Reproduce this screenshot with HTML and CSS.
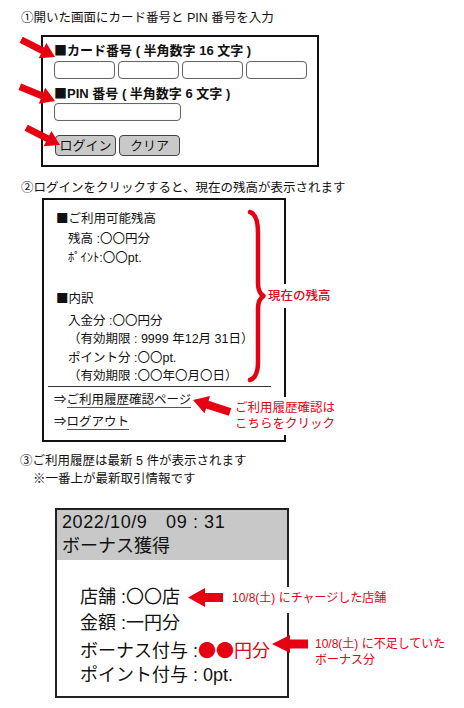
FILE: index.html
```html
<!DOCTYPE html>
<html lang="ja">
<head>
<meta charset="utf-8">
<title>ログイン手順</title>
<link rel="stylesheet" href="styles.css">
</head>
<body>
<div class="page">
  <section class="step step1">
    <p class="title">①開いた画面にカード番号と PIN 番号を入力</p>
    <div class="login-box">
      <p class="field-label"><span class="sym">■</span>カード番号 ( 半角数字 16 文字 )</p>
      <div class="card-row">
        <input class="inp card" type="text">
        <input class="inp card" type="text">
        <input class="inp card" type="text">
        <input class="inp card" type="text">
      </div>
      <p class="field-label pin-label"><span class="sym">■</span>PIN 番号 ( 半角数字 6 文字 )</p>
      <input class="inp pin" type="text">
      <div class="btn-row">
        <button class="btn" type="button">ログイン</button>
        <button class="btn" type="button">クリア</button>
      </div>
    </div>
  </section>

  <section class="step step2">
    <p class="title">②ログインをクリックすると、現在の残高が表示されます</p>
    <div class="balance-box">
      <p class="b-head"><span class="sym">■</span>ご利用可能残高</p>
      <p class="b-row first">残高 :〇〇円分</p>
      <p class="b-row">ﾎﾟｲﾝﾄ:〇〇pt.</p>
      <p class="b-head detail"><span class="sym">■</span>内訳</p>
      <p class="d-row first">入金分 :〇〇円分</p>
      <p class="d-row">（有効期限 : 9999 年12月 31日）</p>
      <p class="d-row">ポイント分 :〇〇pt.</p>
      <p class="d-row">（有効期限 :〇〇年〇月〇日）</p>
      <div class="rule"></div>
      <p class="link first"><span class="sym">⇒</span><span class="ul">ご利用履歴確認ページ</span></p>
      <p class="link"><span class="sym">⇒</span><span class="ul">ログアウト</span></p>
    </div>
  </section>

  <section class="step step3">
    <p class="title t3">③ご利用履歴は最新 5 件が表示されます</p>
    <p class="title t3 note">※一番上が最新取引情報です</p>
    <div class="history-box">
      <div class="h-head">
        <p class="h-line date">2022/10/9　09 : 31</p>
        <p class="h-line">ボーナス獲得</p>
      </div>
      <div class="h-body">
        <p class="h-row">店舗 :〇〇店</p>
        <p class="h-row">金額 :一円分</p>
        <p class="h-row">ボーナス付与 :<span class="red sym">●●</span><span class="red">円分</span></p>
        <p class="h-row">ポイント付与 : 0pt.</p>
      </div>
    </div>
  </section>

  <p class="callout c-balance">現在の残高</p>
  <p class="callout c-history">ご利用履歴確認は<br>こちらをクリック</p>
  <p class="callout c-store">10/8(土) にチャージした店舗</p>
  <p class="callout c-bonus">10/8(土) に不足していた<br>ボーナス分</p>

  <svg class="overlay" width="464" height="708" viewBox="0 0 464 708" aria-hidden="true">
    <g fill="#e60012">
      <polygon transform="translate(55,57) rotate(27)" points="-38,-3.5 -14,-3.5 -14,-8.5 0,0 -14,8.5 -14,3.5 -38,3.5"/>
      <polygon transform="translate(55,101) rotate(22)" points="-38,-3.5 -14,-3.5 -14,-8.5 0,0 -14,8.5 -14,3.5 -38,3.5"/>
      <polygon transform="translate(60,145) rotate(27)" points="-38,-3.5 -14,-3.5 -14,-8.5 0,0 -14,8.5 -14,3.5 -38,3.5"/>
      <polygon transform="translate(193,400) rotate(198)" points="-39,-4 -15,-4 -15,-9 0,0 -15,9 -15,4 -39,4"/>
      <polygon transform="translate(188,597.5) rotate(180)" points="-35,-4.5 -17,-4.5 -17,-9.5 0,0 -17,9.5 -17,4.5 -35,4.5"/>
      <polygon transform="translate(272,644) rotate(180)" points="-36,-4.5 -18,-4.5 -18,-9 0,0 -18,9 -18,4.5 -36,4.5"/>
    </g>
    <path d="M250,212 C256,214 258,221 258,233 L258,283 C258,290 260,294 263.5,296 C260,298 258,302 258,309 L258,362 C258,372 256,378 250,380" fill="none" stroke="#e60012" stroke-width="4.5" stroke-linecap="round" stroke-linejoin="round"/>
  </svg>
</div>
</body>
</html>
```

FILE: styles.css
```css
* {
  box-sizing: border-box;
}

html, body {
  margin: 0;
  padding: 0;
  background: #ffffff;
}

body {
  font-family: "Liberation Sans", "Noto Sans CJK JP", sans-serif;
  color: #111111;
}

p {
  margin: 0;
}

.sym {
  font-family: "Noto Sans CJK JP", sans-serif;
}

.page {
  position: relative;
  width: 464px;
  height: 708px;
  overflow: hidden;
}

.step {
  display: flex;
  flex-direction: column;
  align-items: flex-start;
}

.title {
  font-size: 12.5px;
  line-height: 20px;
  height: 20px;
  padding-left: 21px;
  white-space: nowrap;
}

/* ---------- step 1 ---------- */
.step1 {
  padding-top: 7.5px;
}

.login-box {
  margin-top: 7.5px;
  margin-left: 41px;
  width: 278px;
  height: 132px;
  border: 2px solid #111111;
  padding: 4px 0 0 11px;
  display: flex;
  flex-direction: column;
  align-items: flex-start;
}

.field-label {
  font-size: 13px;
  line-height: 18px;
  height: 18px;
  font-weight: 700;
  white-space: nowrap;
}

.pin-label {
  margin-top: 5px;
}

.card-row {
  margin-top: 2px;
  display: flex;
  gap: 3px;
}

.inp {
  display: block;
  margin: 0;
  padding: 0;
  height: 18px;
  border: 1px solid #666666;
  border-radius: 4px;
  background: #ffffff;
  box-shadow: inset 0 0 1px rgba(0, 0, 0, 0.25);
}

.card {
  width: 61px;
}

.pin {
  margin-top: 1px;
  width: 127px;
}

.btn-row {
  margin-top: 14px;
  margin-left: 1px;
  display: flex;
  gap: 3px;
}

.btn {
  margin: 0;
  padding: 0;
  width: 61px;
  height: 21px;
  border: 1px solid #444444;
  border-radius: 4px;
  background: #c9c9c9;
  font-family: "Liberation Sans", "Noto Sans CJK JP", sans-serif;
  font-size: 13px;
  line-height: 19px;
  color: #111111;
}

/* ---------- step 2 ---------- */
.step2 {
  margin-top: 11px;
}

.balance-box {
  margin-left: 42px;
  width: 244px;
  height: 244px;
  border: 2px solid #111111;
  padding: 8px 0 0 0;
  font-size: 12.5px;
  display: flex;
  flex-direction: column;
  align-items: flex-start;
}

.b-head {
  padding-left: 12px;
  line-height: 19px;
  height: 19px;
  white-space: nowrap;
}

.b-head.detail {
  margin-top: 20.5px;
}

.b-row {
  padding-left: 24px;
  line-height: 19px;
  height: 19px;
  white-space: nowrap;
}

.b-row.first {
  margin-top: 2.5px;
}

.d-row {
  padding-left: 24px;
  line-height: 18.3px;
  height: 18.3px;
  white-space: nowrap;
}

.d-row.first {
  margin-top: 5px;
}

.rule {
  margin: 0.8px 0 0 4px;
  width: 223px;
  height: 1px;
  background: #333333;
}

.link {
  padding-left: 10px;
  line-height: 19px;
  height: 19px;
  white-space: nowrap;
  margin-top: 3px;
}

.link.first {
  margin-top: 2.5px;
}

.ul {
  border-bottom: 1px solid #555555;
}

/* ---------- step 3 ---------- */
.step3 {
  margin-top: 10px;
}

.t3 {
  line-height: 18px;
  height: 18px;
  padding-left: 20px;
}

.t3.note {
  padding-left: 33px;
}

.history-box {
  margin-top: 20px;
  margin-left: 55px;
  width: 234px;
  height: 190px;
  border: 2px solid #222222;
  font-size: 18px;
}

.h-head {
  height: 50px;
  background: #c8c8c8;
  padding-left: 5px;
}

.h-line {
  line-height: 24px;
  height: 24px;
  white-space: nowrap;
}

.h-line.date {
  letter-spacing: 0.6px;
}

.h-body {
  margin-top: 24px;
  padding-left: 23px;
}

.h-row {
  line-height: 26px;
  height: 26px;
  white-space: nowrap;
}

.red {
  color: #e60012;
}

/* ---------- callouts ---------- */
.callout {
  position: absolute;
  z-index: 2;
  background: #ffffff;
  color: #e60012;
  font-size: 12.5px;
  white-space: nowrap;
}

.c-balance {
  left: 266px;
  top: 284px;
  height: 24px;
  line-height: 24px;
  padding: 0 2px;
  font-weight: 500;
}

.c-history {
  left: 232px;
  top: 397px;
  line-height: 16px;
  padding: 3px 3px;
}

.c-store {
  left: 228px;
  top: 587px;
  line-height: 22px;
  padding: 0 4px 4px 4px;
  font-size: 12px;
}

.c-bonus {
  left: 315px;
  top: 636px;
  line-height: 16px;
  font-size: 12px;
  background: transparent;
}

.overlay {
  position: absolute;
  left: 0;
  top: 0;
  z-index: 3;
  pointer-events: none;
}
```
